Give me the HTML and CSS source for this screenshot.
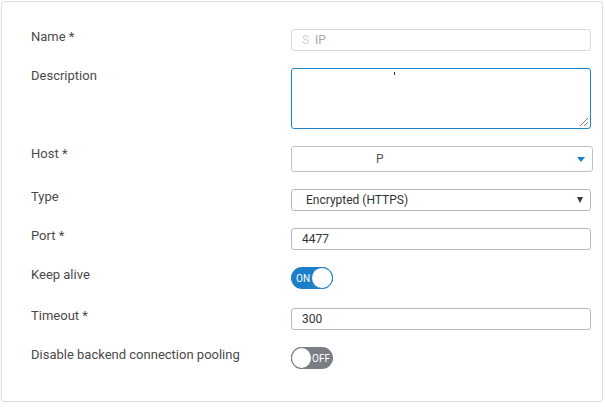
FILE: index.html
```html
<!DOCTYPE html>
<html lang="en">
<head>
    <meta charset="UTF-8">
    <title>Backend server</title>
    <link rel="stylesheet" href="styles.css">
</head>
<body>
    <div class="panel">
        <div class="row">
            <label class="label">Name *</label>
            <div class="field input muted"><span class="faint">S</span>&nbsp; IP</div>
        </div>
        <div class="row">
            <label class="label">Description</label>
            <div class="field textarea"><span class="tick"></span><span class="grip"></span></div>
        </div>
        <div class="row">
            <label class="label">Host *</label>
            <div class="field combo"><span class="combo-value">P</span><span class="caret-blue"></span></div>
        </div>
        <div class="row">
            <label class="label">Type</label>
            <div class="field select"><span>Encrypted (HTTPS)</span><span class="caret-dark"></span></div>
        </div>
        <div class="row">
            <label class="label">Port *</label>
            <div class="field input">4477</div>
        </div>
        <div class="row toggle-row">
            <label class="label">Keep alive</label>
            <div class="toggle on"><span class="toggle-text">ON</span><span class="knob"></span></div>
        </div>
        <div class="row">
            <label class="label">Timeout *</label>
            <div class="field input">300</div>
        </div>
        <div class="row toggle-row">
            <label class="label">Disable backend connection pooling</label>
            <div class="toggle off"><span class="knob"></span><span class="toggle-text">OFF</span></div>
        </div>
    </div>
</body>
</html>
```

FILE: styles.css
```css
body {
    margin: 0;
    padding: 1px 0 0 1px;
    background-color: #ffffff;
    font-family: Roboto, "Liberation Sans", sans-serif;
    font-size: 12px;
    color: #4a4a4a;
}
.panel {
    width: 600px;
    height: 372px;
    padding-top: 27px;
    border: 1px solid #dcdcdc;
    border-radius: 3px;
    box-sizing: content-box;
    display: flex;
    flex-direction: column;
    gap: 17px;
}
.row {
    display: flex;
    align-items: flex-start;
}
.toggle-row {
    min-height: 24px;
}
.label {
    width: 260px;
    padding-left: 29px;
    font-size: 13px;
    line-height: 15px;
}
.field {
    width: 300px;
    box-sizing: border-box;
    border: 1px solid #b5b9bf;
    border-radius: 3px;
    display: flex;
    align-items: center;
    position: relative;
}
.input {
    height: 22px;
    padding-left: 10px;
    color: #333333;
}
.muted {
    border-color: #d6d8db;
    color: #a4a8ad;
}
.faint {
    color: #d2d4d7;
}
.textarea {
    height: 61px;
    border-color: #1d84cf;
    align-items: flex-start;
}
.tick {
    position: absolute;
    left: 102px;
    top: 3px;
    width: 1px;
    height: 3px;
    background-color: #333333;
}
.grip {
    position: absolute;
    right: 2px;
    bottom: 2px;
    width: 8px;
    height: 8px;
    background: linear-gradient(135deg, transparent 45%, #777 45%, #777 52%, transparent 52%, transparent 70%, #777 70%, #777 77%, transparent 77%);
}
.combo {
    width: 302px;
    height: 26px;
    border-color: #bfc2c6;
    padding-left: 84px;
    color: #555555;
}
.combo-value {
    flex: 1;
}
.caret-blue {
    width: 0;
    height: 0;
    margin-right: 7px;
    border-left: 4px solid transparent;
    border-right: 4px solid transparent;
    border-top: 5px solid #1d7fc8;
}
.select {
    height: 22px;
    padding-left: 14px;
    color: #333333;
    justify-content: space-between;
}
.caret-dark {
    width: 0;
    height: 0;
    margin-right: 7px;
    border-left: 3px solid transparent;
    border-right: 3px solid transparent;
    border-top: 6px solid #333a40;
}
.toggle {
    width: 42px;
    height: 22px;
    border-radius: 11px;
    box-sizing: border-box;
    display: flex;
    align-items: center;
    color: #ffffff;
    font-size: 10px;
}
.toggle.on {
    background-color: #1b7fca;
    padding-left: 5px;
    justify-content: space-between;
}
.toggle.off {
    background-color: #7a7f86;
    justify-content: space-between;
    padding-right: 3px;
}
.knob {
    width: 22px;
    height: 22px;
    border-radius: 50%;
    box-sizing: border-box;
    background-color: #ffffff;
}
.on .knob {
    border: 1px solid #1b7fca;
}
.off .knob {
    border: 1px solid #7a7f86;
}
```
